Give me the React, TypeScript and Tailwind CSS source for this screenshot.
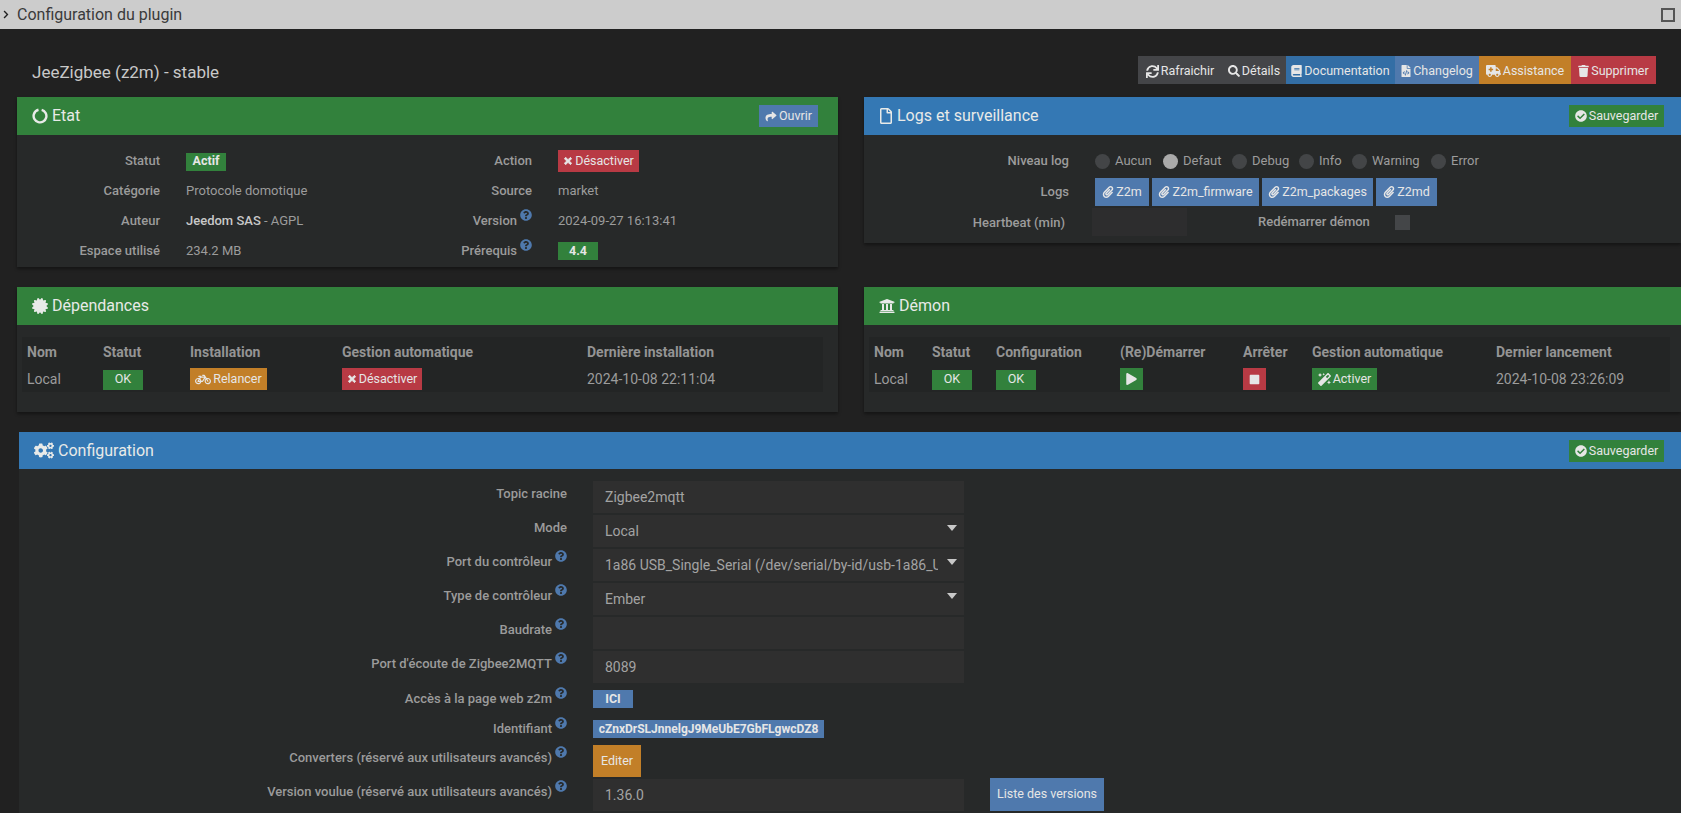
import type { ReactNode } from "react"
import {
  FaAmbulance,
  FaBicycle,
  FaBook,
  FaCertificate,
  FaCheckCircle,
  FaChevronRight,
  FaCogs,
  FaFileCode,
  FaMagic,
  FaPaperclip,
  FaPlay,
  FaQuestionCircle,
  FaRegFile,
  FaSearch,
  FaShare,
  FaStop,
  FaSync,
  FaTimes,
  FaTrash,
  FaUniversity,
} from "react-icons/fa"

function Help() {
  return <FaQuestionCircle className="ml-[3px] mt-[-12px] w-[12px] h-[12px] shrink-0 text-[#4f79ad]" />
}

function Cross() {
  return <FaTimes className="w-[10px] h-[10px]" stroke="currentColor" strokeWidth={50} />
}

function Btn({ color, icon, children, className }: { color: string; icon?: ReactNode; children?: ReactNode; className?: string }) {
  return (
    <span className={`inline-flex items-center justify-center gap-[2px] text-[#e6e6e6] ${color} ${className ?? ""}`}>
      {icon}
      {children}
    </span>
  )
}

function PanelHead({ color, icon, title, tall = true, children }: { color: string; icon: ReactNode; title: string; tall?: boolean; children?: ReactNode }) {
  return (
    <div className={`flex items-center pl-[15px] pr-[17px] ${tall ? "h-[38px]" : "h-[37px]"} ${color}`}>
      {icon}
      <span className="ml-[4px] text-[16px] text-[#e8eae8]">{title}</span>
      <div className={`ml-auto flex ${tall ? "" : "pt-[1px]"}`}>{children}</div>
    </div>
  )
}

function Radio({ label, on, cls }: { label: string; on?: boolean; cls: string }) {
  return (
    <div className={`flex items-center ${cls}`}>
      <span className={`w-[15px] h-[15px] rounded-full ${on ? "bg-[#aaaaaa]" : "bg-[#434547]"}`} />
      <span className="ml-[5px]">{label}</span>
    </div>
  )
}

function EtatRows() {
  const label = "text-right font-medium text-[#9b9b9b]"
  return (
    <div className="grid grid-cols-[143px_198px_174px_1fr] auto-rows-[30px] items-center mt-[11px] text-[13px] text-[#9c9c9c]">
      <div className={label}>Statut</div>
      <div className="pl-[26px]">
        <Btn color="bg-[#32813c]" className="w-[40px] h-[18px] text-[12.5px] font-bold">Actif</Btn>
      </div>
      <div className={label}>Action</div>
      <div className="pl-[26px] flex">
        <Btn color="bg-[#b83a44]" icon={<Cross />} className="w-[81px] h-[22px] text-[12.5px]">Désactiver</Btn>
      </div>

      <div className={label}>Catégorie</div>
      <div className="pl-[26px]">Protocole domotique</div>
      <div className={label}>Source</div>
      <div className="pl-[26px]">market</div>

      <div className={label}>Auteur</div>
      <div className="pl-[26px]">
        <span className="font-medium text-[#c8c8c8]">Jeedom SAS</span> - AGPL
      </div>
      <div className={`${label} flex items-center justify-end`}>
        Version
        <Help />
      </div>
      <div className="pl-[26px]">2024-09-27 16:13:41</div>

      <div className={label}>Espace utilisé</div>
      <div className="pl-[26px]">234.2 MB</div>
      <div className={`${label} flex items-center justify-end`}>
        Prérequis
        <Help />
      </div>
      <div className="pl-[26px] flex">
        <Btn color="bg-[#32813c]" className="w-[40px] h-[18px] text-[12.5px] font-bold">4.4</Btn>
      </div>
    </div>
  )
}

function LogLink({ name, w }: { name: string; w: string }) {
  return (
    <Btn color="bg-[#4f79ad]" icon={<FaPaperclip className="w-[12px] h-[12px]" />} className={`${w} h-[28px] text-[12.5px]`}>
      {name}
    </Btn>
  )
}

function LogsBody() {
  return (
    <div className="pt-[11px] text-[13px] text-[#9c9c9c] h-[108px]">
      <div className="flex items-center h-[30px]">
        <div className="w-[205px] text-right font-medium">Niveau log</div>
        <div className="flex items-center ml-[26px]">
          <Radio label="Aucun" cls="w-[68px]" />
          <Radio label="Defaut" on cls="w-[69px]" />
          <Radio label="Debug" cls="w-[67px]" />
          <Radio label="Info" cls="w-[53px]" />
          <Radio label="Warning" cls="w-[79px]" />
          <Radio label="Error" cls="" />
        </div>
      </div>
      <div className="flex items-center h-[28px] mt-[2px]">
        <div className="w-[205px] text-right font-medium">Logs</div>
        <div className="flex ml-[26px] gap-[3px]">
          <LogLink name="Z2m" w="w-[54px]" />
          <LogLink name="Z2m_firmware" w="w-[107px]" />
          <LogLink name="Z2m_packages" w="w-[111px]" />
          <LogLink name="Z2md" w="w-[61px]" />
        </div>
      </div>
      <div className="flex items-center h-[28px] mt-[2px]">
        <div className="w-[201px] text-right font-medium pt-[1px]">Heartbeat (min)</div>
        <div className="ml-[27px] w-[95px] h-[28px] bg-[#2d2d2e]" />
        <div className="ml-[71px] w-[112px] font-medium whitespace-nowrap">Redémarrer démon</div>
        <div className="ml-[25px] mt-[1px] w-[15px] h-[15px] bg-[#444648]" />
      </div>
    </div>
  )
}

function DepTable() {
  return (
    <div className="mt-[12px] ml-[5px] mr-[15px] h-[55px] bg-[#232525] pl-[5px] text-[14px] text-[#9c9c9c]">
      <div className="grid grid-cols-[76px_87px_152px_245px_1fr] items-center h-[29px] font-bold pt-[1px] text-[#949494]">
        <div>Nom</div>
        <div>Statut</div>
        <div>Installation</div>
        <div>Gestion automatique</div>
        <div>Dernière installation</div>
      </div>
      <div className="grid grid-cols-[76px_87px_152px_245px_1fr] items-center h-[26px]">
        <div>Local</div>
        <div>
          <Btn color="bg-[#32813c]" className="w-[40px] h-[20px] text-[12.5px]">OK</Btn>
        </div>
        <div className="flex">
          <Btn color="bg-[#c27f28]" icon={<FaBicycle className="w-[16px] h-[13px]" />} className="w-[77px] h-[22px] text-[12.5px]">Relancer</Btn>
        </div>
        <div className="flex">
          <Btn color="bg-[#b83a44]" icon={<Cross />} className="w-[80px] h-[22px] text-[12.5px]">Désactiver</Btn>
        </div>
        <div>2024-10-08 22:11:04</div>
      </div>
    </div>
  )
}

function DemonTable() {
  return (
    <div className="mt-[12px] ml-[5px] mr-[11px] h-[55px] bg-[#232525] pl-[5px] text-[14px] text-[#9c9c9c]">
      <div className="grid grid-cols-[58px_64px_124px_123px_69px_184px_1fr] items-center h-[29px] font-bold pt-[1px] text-[#949494]">
        <div>Nom</div>
        <div>Statut</div>
        <div>Configuration</div>
        <div>(Re)Démarrer</div>
        <div>Arrêter</div>
        <div>Gestion automatique</div>
        <div>Dernier lancement</div>
      </div>
      <div className="grid grid-cols-[58px_64px_124px_123px_69px_184px_1fr] items-center h-[26px]">
        <div>Local</div>
        <div>
          <Btn color="bg-[#32813c]" className="w-[40px] h-[20px] text-[12.5px]">OK</Btn>
        </div>
        <div>
          <Btn color="bg-[#32813c]" className="w-[40px] h-[20px] text-[12.5px]">OK</Btn>
        </div>
        <div className="flex">
          <Btn color="bg-[#32813c]" icon={<FaPlay className="w-[11px] h-[12px]" />} className="w-[23px] h-[22px]" />
        </div>
        <div className="flex">
          <Btn color="bg-[#b83a44]" icon={<FaStop className="w-[11px] h-[11px]" />} className="w-[23px] h-[22px]" />
        </div>
        <div className="flex">
          <Btn color="bg-[#32813c]" icon={<FaMagic className="w-[13px] h-[13px]" />} className="w-[65px] h-[22px] text-[12.5px]">Activer</Btn>
        </div>
        <div>2024-10-08 23:26:09</div>
      </div>
    </div>
  )
}

function Row({ label, help, className, children }: { label: string; help?: boolean; className: string; children: ReactNode }) {
  return (
    <div className={`flex ${className}`}>
      <div className="w-[548px] flex justify-end items-center h-[26px] font-medium text-[#9b9b9b] whitespace-nowrap">
        {label}
        {help && <Help />}
      </div>
      <div className="ml-[26px] flex flex-1">{children}</div>
    </div>
  )
}

function Field({ value, caret }: { value?: string; caret?: boolean }) {
  return (
    <div className="w-[371px] h-[32px] bg-[#2f2f2f] flex items-center pl-[12px] pr-[7px] text-[14px] text-[#a3a3a3]">
      <span className="w-[333px] overflow-hidden whitespace-nowrap">{value}</span>
      {caret && <span className="ml-auto mt-[-6px] w-0 h-0 border-x-[5px] border-x-transparent border-t-[6px] border-t-[#c8c8c8]" />}
    </div>
  )
}

function ConfigBody() {
  return (
    <div className="bg-[#272929] pt-[12px] text-[13px] h-[344px]">
      <Row label="Topic racine" className="h-[32px]">
        <Field value="Zigbee2mqtt" />
      </Row>
      <Row label="Mode" className="h-[32px] mt-[2px]">
        <Field value="Local" caret />
      </Row>
      <Row label="Port du contrôleur" help className="h-[32px] mt-[2px]">
        <Field value="1a86 USB_Single_Serial (/dev/serial/by-id/usb-1a86_USB_Single_Serial" caret />
      </Row>
      <Row label="Type de contrôleur" help className="h-[32px] mt-[2px]">
        <Field value="Ember" caret />
      </Row>
      <Row label="Baudrate" help className="h-[32px] mt-[2px]">
        <Field />
      </Row>
      <Row label="Port d'écoute de Zigbee2MQTT" help className="h-[32px] mt-[2px]">
        <Field value="8089" />
      </Row>
      <Row label="Accès à la page web z2m" help className="h-[18px] mt-[7px] items-center">
        <Btn color="bg-[#4f79ad]" className="w-[40px] h-[18px] text-[12.5px] font-bold">ICI</Btn>
      </Row>
      <Row label="Identifiant" help className="h-[18px] mt-[12px] items-center">
        <Btn color="bg-[#4f79ad]" className="w-[231px] h-[18px] text-[12px] font-bold">cZnxDrSLJnnelgJ9MeUbE7GbFLgwcDZ8</Btn>
      </Row>
      <Row label="Converters (réservé aux utilisateurs avancés)" help className="h-[32px] mt-[7px]">
        <Btn color="bg-[#c27f28]" className="w-[48px] h-[32px] text-[12.5px]">Editer</Btn>
      </Row>
      <Row label="Version voulue (réservé aux utilisateurs avancés)" help className="h-[32px] mt-[2px]">
        <Field value="1.36.0" />
        <Btn color="bg-[#4f79ad]" className="ml-[26px] mt-[-1px] w-[114px] h-[33px] text-[12.5px]">Liste des versions</Btn>
      </Row>
    </div>
  )
}

export default function App() {
  const save = (
    <Btn color="bg-[#32813c]" icon={<FaCheckCircle className="w-[12px] h-[12px]" />} className="w-[95px] h-[22px] text-[12.5px]">
      Sauvegarder
    </Btn>
  )
  const panelBody = "bg-[#272929] shadow-[0_2px_3px_rgba(0,0,0,0.4)]"
  const topBtn = "h-[28px] pt-[2px] text-[12.5px]"
  return (
    <div className="h-[813px] overflow-hidden bg-[#212121] font-['Roboto',sans-serif]">
      <div className="flex items-center h-[29px] bg-[#cccccc] text-[#3a3a3a]">
        <FaChevronRight className="ml-[2px] w-[8px] h-[9px] text-[#222222]" />
        <span className="ml-[7px] text-[16px]">Configuration du plugin</span>
        <span className="ml-auto mr-[6px] w-[14px] h-[14px] border-2 border-[#555555]" />
      </div>

      <div className="flex items-center h-[28px] mt-[27px] mb-[13px] pl-[32px] pr-[25px]">
        <span className="pt-[5px] text-[17px] text-[#c9c9c9]">JeeZigbee (z2m) - stable</span>
        <div className="ml-auto flex">
          <Btn color="bg-[#444548]" icon={<FaSync className="w-[13px] h-[13px]" />} className={`w-[84px] ${topBtn}`}>Rafraichir</Btn>
          <Btn color="bg-[#444548]" icon={<FaSearch className="w-[12px] h-[12px]" />} className={`w-[64px] ${topBtn}`}>Détails</Btn>
          <Btn color="bg-[#336ea5]" icon={<FaBook className="w-[11px] h-[12px]" />} className={`w-[109px] ${topBtn}`}>Documentation</Btn>
          <Btn color="bg-[#4f79ad]" icon={<FaFileCode className="w-[10px] h-[12px]" />} className={`w-[84px] ${topBtn}`}>Changelog</Btn>
          <Btn color="bg-[#c27f28]" icon={<FaAmbulance className="w-[15px] h-[12px]" />} className={`w-[92px] ${topBtn}`}>Assistance</Btn>
          <Btn color="bg-[#b83a44]" icon={<FaTrash className="w-[11px] h-[12px]" />} className={`w-[85px] ${topBtn}`}>Supprimer</Btn>
        </div>
      </div>

      <div className="grid grid-cols-[821px_817px] gap-x-[26px] gap-y-[20px] pl-[17px] items-start">
        <div className={panelBody}>
          <PanelHead
            color="bg-[#32813c]"
            icon={
              <svg viewBox="0 0 16 16" className="w-[16px] h-[16px]">
                <circle cx="8" cy="8" r="6.4" fill="none" stroke="#e8eae8" strokeWidth="2.4" strokeDasharray="36 4.2" transform="rotate(-75 8 8)" />
              </svg>
            }
            title="Etat"
          >
            <Btn color="bg-[#4f79ad]" icon={<FaShare className="w-[12px] h-[11px]" />} className="w-[59px] h-[22px] mr-[3px] text-[12.5px]">Ouvrir</Btn>
          </PanelHead>
          <div className="h-[132px] overflow-hidden">
            <EtatRows />
          </div>
        </div>
        <div className={panelBody}>
          <PanelHead
            color="bg-[#3478b4]"
            icon={<FaRegFile className="w-[14px] h-[16px] text-[#e8eae8]" />}
            title="Logs et surveillance"
          >
            {save}
          </PanelHead>
          <LogsBody />
        </div>
        <div className={panelBody}>
          <PanelHead
            color="bg-[#32813c]"
            icon={<FaCertificate className="w-[16px] h-[16px] text-[#e8eae8]" />}
            title="Dépendances"
          />
          <div className="h-[87px] overflow-hidden">
            <DepTable />
          </div>
        </div>
        <div className={panelBody}>
          <PanelHead
            color="bg-[#32813c]"
            icon={<FaUniversity className="w-[16px] h-[16px] text-[#e8eae8]" />}
            title="Démon"
          />
          <div className="h-[87px] overflow-hidden">
            <DemonTable />
          </div>
        </div>
      </div>

      <div className="mt-[20px] ml-[19px]">
        <PanelHead
          color="bg-[#3478b4]"
          tall={false}
          icon={<FaCogs className="w-[20px] h-[17px] text-[#e8eae8]" />}
          title="Configuration"
        >
          {save}
        </PanelHead>
        <ConfigBody />
      </div>
    </div>
  )
}
